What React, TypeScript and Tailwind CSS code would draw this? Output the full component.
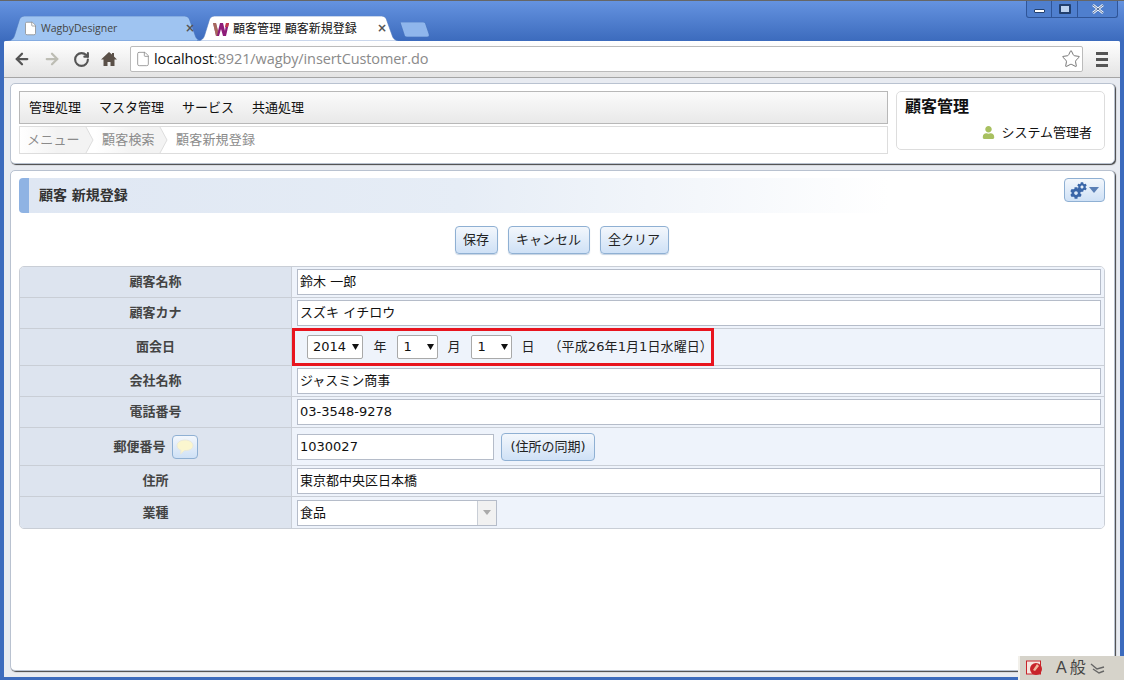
import React from "react";
import { FaCog, FaUser } from "react-icons/fa";
import { Star, File, ArrowLeft, ArrowRight, RotateCw } from "lucide-react";

const jp = "font-['DejaVu_Sans','Noto_Sans_CJK_JP',sans-serif]";

function TabShape({ color, w }: { color: string; w: number }) {
  return (
    <svg className="absolute inset-0" width={w} height={25} viewBox={`0 0 ${w} 25`}>
      <path
        d={`M0 25 C5 25 7 22 8 18 L12 5 C13 1 15 0 19 0 L${w - 20} 0 C${w - 16} 0 ${w - 14} 1 ${w - 13} 5 L${w - 8} 19 C${w - 7} 23 ${w - 4} 25 ${w} 25 Z`}
        fill={color}
        stroke="#4a76bd"
        strokeWidth="0.6"
      />
    </svg>
  );
}

function WLogo() {
  return (
    <svg width="16" height="16" viewBox="0 0 16 16" className="shrink-0">
      <path d="M0 2h3l2 8 2-8h3l2 8 1-8h3l-3 13h-3l-2-7-2 7H3z" fill="#8e1b78" />
      <path d="M0 2h3l2 8-1 5H3z" fill="#b08a50" opacity="0.7" />
      <path d="M13 2h3l-1 4h-3z" fill="#c23a4a" />
    </svg>
  );
}

function Crumb({ label, tinted, w }: { label: string; tinted?: boolean; w: number }) {
  return (
    <div
      className={`relative flex h-full items-center pl-[7px] text-[13px] text-[#8b8b8b] ${tinted ? "bg-gradient-to-r from-white via-[#f3f3f3] to-[#f3f3f3]" : ""}`}
      style={{ width: w }}
    >
      <span className="tracking-[0.2px]">{label}</span>
      {tinted && (
        <svg className="absolute right-0 top-0" width="10" height="26" viewBox="0 0 10 26">
          <path d="M1 0H10V26H1L8 13Z" fill="#fff" />
          <path d="M1 0L8 13L1 26" fill="none" stroke="#dddddd" />
        </svg>
      )}
    </div>
  );
}

function Row({ label, h, children, extra }: { label: string; h: number; children: React.ReactNode; extra?: React.ReactNode }) {
  return (
    <div className="flex border-b border-[#c9ced6] last:border-b-0" style={{ height: h }}>
      <div className="flex w-[272px] shrink-0 items-center justify-center gap-2 border-r border-[#c9ced6] bg-[#dde4ef] text-[13px] font-bold text-[#444]">
        <span>{label}</span>
        {extra}
      </div>
      <div className="flex min-w-0 flex-1 items-center bg-[#eef3fb] pl-[5px] pr-[3px]">{children}</div>
    </div>
  );
}

function TextInput({ value }: { value: string }) {
  return (
    <div className="flex h-[26px] w-full items-center border border-[#b5bcc9] bg-white pl-[2px] text-[13px] text-[#111]">
      {value}
    </div>
  );
}

function Sel({ value, w }: { value: string; w: number }) {
  return (
    <div className="flex h-[24px] items-center justify-between rounded-[2px] border border-[#a9a9a9] bg-white pl-[5px] pr-[3px] text-[13px] text-[#111]" style={{ width: w }}>
      <span>{value}</span>
      <svg width="7" height="6" viewBox="0 0 7 6"><path d="M0 0h7L3.5 6z" fill="#111" /></svg>
    </div>
  );
}

function Btn({ label, w }: { label: string; w: number }) {
  return (
    <div className="flex h-[28px] items-center justify-center rounded-[4px] border border-[#8fb0d3] bg-gradient-to-b from-[#f3f7fc] to-[#cfe1f6] text-[13px] text-[#222] shadow-[0_1px_1px_#c5d2e2]" style={{ width: w }}>
      {label}
    </div>
  );
}

export default function App() {
  return (
    <div className={`relative flex h-[680px] w-[1124px] flex-col overflow-hidden border-t border-[#666] bg-[#3c6bbd] ${jp}`}>
      {/* window controls */}
      <div className="absolute right-[6px] top-0 z-20 flex h-[17px] w-[92px] overflow-hidden rounded-b-[3px] border border-t-0 border-[#2f5598] bg-[#4f7fce]">
        <div className="flex w-[25px] items-center justify-center border-r border-[#2f5598]">
          <div className="mt-[3px] h-[4px] w-[11px] rounded-[1px] border border-[#22406f] bg-white" />
        </div>
        <div className="flex w-[26px] items-center justify-center border-r border-[#2f5598]">
          <div className="h-[10px] w-[12px] rounded-[1px] border-2 border-[#22406f] bg-[#bcd2f0]" />
        </div>
        <div className="flex flex-1 items-center justify-center">
          <svg width="12" height="10" viewBox="0 0 12 10"><path d="M1 1l10 8M11 1L1 9" stroke="#fff" strokeWidth="2.4" /><path d="M1 1l10 8M11 1L1 9" stroke="#27477d" strokeWidth="0.8" /></svg>
        </div>
      </div>

      {/* tab strip */}
      <div className="flex h-[40px] shrink-0 items-end bg-gradient-to-b from-[#6593e0] to-[#3c6bbd] pl-[7px]">
        <div className="relative h-[25px] w-[196px] shrink-0">
          <TabShape color="#9fc4f1" w={196} />
          <div className="relative flex h-full items-center pl-[16px] text-[#444]">
            <File size={15} className="shrink-0 text-[#888]" fill="#fff" strokeWidth={1.2} />
            <span className="ml-[3px] font-['Open_Sans','Noto_Sans_CJK_JP',sans-serif] text-[10.5px]">WagbyDesigner</span>
            <span className="absolute right-[8px] top-[6px] text-[12px] font-bold leading-none text-[#555]">×</span>
          </div>
        </div>
        <div className="relative z-10 -ml-[6px] h-[25px] w-[203px] shrink-0">
          <TabShape color="#ffffff" w={203} />
          <div className="relative flex h-full items-center pl-[16px] text-[12px] text-[#111]">
            <WLogo />
            <span className="ml-[4px]">顧客管理 顧客新規登録</span>
            <span className="absolute right-[13px] top-[6px] text-[12px] font-bold leading-none text-[#555]">×</span>
          </div>
        </div>
        <div className="relative mb-[4px] h-[15px] w-[30px] shrink-0">
          <svg className="absolute inset-0" width="30" height="15" viewBox="0 0 30 15">
            <path d="M0 0H23C25 0 25.5 1 26 3L29 12C29.5 14 29 15 27 15H7C5 15 4.5 14 4 12Z" fill="#8fb6ec" stroke="#3e6cb8" strokeWidth="0.6" />
          </svg>
        </div>
      </div>

      {/* browser body */}
      <div className="mx-[4px] mb-[3px] flex min-h-0 flex-1 flex-col overflow-hidden rounded-t-[2px] bg-[#e8ebf1]">
        {/* toolbar */}
        <div className="flex h-[37px] shrink-0 items-center border-b border-[#a5a5a5] bg-gradient-to-b from-white to-[#e4e4e4] pl-[9px]">
          <ArrowLeft size={18} strokeWidth={3} className="text-[#555]" />
          <ArrowRight size={18} strokeWidth={3} className="ml-[12px] text-[#bdbdb4]" />
          <RotateCw size={17} strokeWidth={3} className="ml-[12px] text-[#555]" />
          <svg width="16" height="16" viewBox="0 0 16 16" className="ml-[11px]">
            <path d="M8 1L0 8.5h2.5V15H6.5v-4h3v4h4V8.5H16L13 5.5V2h-2v1.5z" fill="#5a5048" />
          </svg>
          <div className="ml-[13px] flex h-[26px] w-[953px] items-center rounded-[2px] border border-[#bbbbbb] bg-white pl-[4px] pr-[1px]">
            <File size={16} className="shrink-0 text-[#888]" strokeWidth={1.2} />
            <span className="ml-[3px] font-['Open_Sans',sans-serif] text-[14.5px] tracking-[-0.1px] text-[#8a8a8a]">
              <span className="text-[#111]">localhost</span>:8921/wagby/insertCustomer.do
            </span>
            <Star size={20} strokeWidth={1.2} className="ml-auto text-[#777]" />
          </div>
          <div className="ml-[13px] flex w-[12px] flex-col gap-[3px]">
            <div className="h-[3px] bg-[#555]" />
            <div className="h-[3px] bg-[#555]" />
            <div className="h-[3px] bg-[#555]" />
          </div>
        </div>

        <div className="flex min-h-0 flex-1 flex-col gap-[6px] pb-[6px] pl-[6px] pr-[5px] pt-[5px]">
          {/* header card */}
          <div className="flex h-[81px] shrink-0 gap-[8px] rounded-[5px] border border-[#b9c2d0] bg-white pl-[8px] pr-[9px] pt-[7px] shadow-[1px_1px_1px_#444]">
            <div className="flex w-[869px] shrink-0 flex-col gap-[2px]">
              <div className="flex h-[33px] items-center gap-[18px] border border-[#b8b8b8] bg-gradient-to-b from-[#fbfbfb] to-[#e9e9e9] pl-[9px] text-[13px] text-[#111]">
                <span>管理処理</span>
                <span>マスタ管理</span>
                <span>サービス</span>
                <span>共通処理</span>
              </div>
              <div className="flex h-[28px] items-center border border-[#dddddd]">
                <Crumb label="メニュー" tinted w={75} />
                <Crumb label="顧客検索" tinted w={74} />
                <Crumb label="顧客新規登録" w={100} />
              </div>
            </div>
            <div className="flex h-[59px] flex-1 flex-col rounded-[5px] border border-[#dddddd] pl-[8px] pr-[12px] pt-[5px]">
              <div className="text-[16px] font-bold leading-[20px] text-[#111]">顧客管理</div>
              <div className="mt-[6px] flex items-center justify-end gap-[6px] text-[13px] text-[#111]">
                <FaUser size={13} className="text-[#a8c060]" />
                <span>システム管理者</span>
              </div>
            </div>
          </div>

          {/* form card */}
          <div className="flex min-h-0 flex-1 flex-col rounded-[5px] border border-[#b9c2d0] bg-white pl-[8px] pr-[9px] pt-[7px] shadow-[1px_1px_1px_#444]">
            <div className="flex items-start justify-between">
              <div className="flex h-[35px] w-[869px] items-center rounded-l-[4px] border-l-[10px] border-[#8fb3e3] bg-gradient-to-r from-[#dfe7f3] via-[#e6edf6] to-white pl-[10px] text-[14px] font-bold text-[#333]">
                顧客 新規登録
              </div>
              <div className="flex h-[24px] w-[41px] items-center justify-center gap-[2px] rounded-[4px] border border-[#8fb0d3] bg-gradient-to-b from-[#f3f7fc] to-[#cfe1f6]">
                <span className="relative block h-[17px] w-[17px]">
                  <FaCog size={12} className="absolute bottom-0 left-0 text-[#3a66a8]" />
                  <FaCog size={10} className="absolute right-0 top-0 text-[#3a66a8]" />
                </span>
                <svg width="10" height="6" viewBox="0 0 10 6"><path d="M0 0h10L5 6z" fill="#5a7fb5" /></svg>
              </div>
            </div>

            <div className="mt-[13px] flex justify-center gap-[10px] pr-[1px]">
              <Btn label="保存" w={43} />
              <Btn label="キャンセル" w={82} />
              <Btn label="全クリア" w={69} />
            </div>

            <div className="mt-[12px] flex flex-col overflow-hidden rounded-[5px] border border-[#c9ced6]">
              <Row label="顧客名称" h={31}><TextInput value="鈴木 一郎" /></Row>
              <Row label="顧客カナ" h={31}><TextInput value="スズキ イチロウ" /></Row>
              <Row label="面会日" h={37}>
                <div className="-ml-[5px] flex h-[38px] w-[422px] shrink-0 items-center border-[3px] border-[#e8141e] pl-[12px] text-[13px] text-[#222]">
                  <Sel value="2014" w={57} />
                  <span className="ml-[10px]">年</span>
                  <span className="ml-[11px]"><Sel value="1" w={41} /></span>
                  <span className="ml-[9px]">月</span>
                  <span className="ml-[11px]"><Sel value="1" w={41} /></span>
                  <span className="ml-[9px]">日</span>
                  <span className="ml-[14px] tracking-[0.1px]">（平成26年1月1日水曜日）</span>
                </div>
              </Row>
              <Row label="会社名称" h={31}><TextInput value="ジャスミン商事" /></Row>
              <Row label="電話番号" h={31}><TextInput value="03-3548-9278" /></Row>
              <Row
                label="郵便番号"
                h={38}
                extra={
                  <div className="-ml-[2px] flex h-[24px] w-[26px] items-center justify-center rounded-[4px] border border-[#8fb0d3] bg-gradient-to-b from-[#f3f7fc] to-[#cfe1f6]">
                    <svg width="18" height="16" viewBox="0 0 18 16">
                      <path d="M9 1C4.5 1 1 3.4 1 6.6c0 2.2 1.6 4 4 4.8L4.5 15l4-3.4C13.5 11.8 17 9.8 17 6.6 17 3.4 13.5 1 9 1z" fill="#fbf6cf" stroke="#e8e8dc" />
                    </svg>
                  </div>
                }
              >
                <div className="flex h-[26px] w-[197px] shrink-0 items-center border border-[#b5bcc9] bg-white pl-[2px] text-[13px] text-[#111]">1030027</div>
                <div className="ml-[7px] flex h-[28px] w-[94px] items-center justify-center rounded-[4px] border border-[#8fb0d3] bg-gradient-to-b from-[#f3f7fc] to-[#cfe1f6] text-[13px] text-[#222]">(住所の同期)</div>
              </Row>
              <Row label="住所" h={31}><TextInput value="東京都中央区日本橋" /></Row>
              <Row label="業種" h={31}>
                <div className="flex h-[26px] w-[200px] items-center border border-[#b5bcc9] bg-white pl-[2px] text-[13px] text-[#111]">
                  <span className="flex-1">食品</span>
                  <div className="flex h-full w-[19px] items-center justify-center border-l border-[#c9ced6] bg-[#f1f1f1]">
                    <svg width="8" height="5" viewBox="0 0 8 5"><path d="M0 0h8L4 5z" fill="#aaa" /></svg>
                  </div>
                </div>
              </Row>
            </div>
          </div>
        </div>
      </div>

      {/* IME bar */}
      <div className="absolute bottom-0 right-0 flex h-[24px] w-[106px] items-center border-l-2 border-[#f2f0ea] bg-[#d6d3ca] pl-[6px] text-[16px] text-[#444]">
        <svg width="17" height="16" viewBox="0 0 17 16">
          <rect x="0.5" y="1" width="14" height="13" fill="#f5e6e0" stroke="#c8232a" />
          <circle cx="10" cy="9" r="6" fill="#c8232a" />
          <path d="M7 10l4-6 2 2-4 5z" fill="#f2b8a0" />
        </svg>
        <span className="ml-[13px] font-['Liberation_Sans','Noto_Sans_CJK_JP',sans-serif]">A</span>
        <span className="ml-[3px]">般</span>
        <svg width="16" height="12" viewBox="0 0 16 12" className="ml-[4px]">
          <path d="M1 2l6 5 7-2M3 7l6 4 5-2" stroke="#666" strokeWidth="1.4" fill="none" />
        </svg>
      </div>
    </div>
  );
}
